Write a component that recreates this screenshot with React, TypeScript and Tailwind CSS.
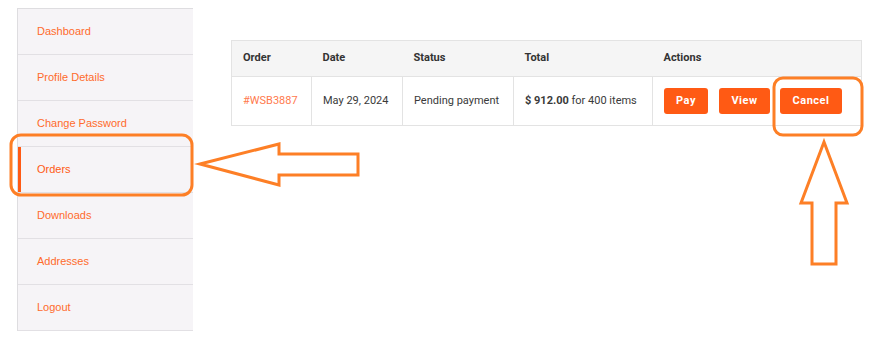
const menu = [
  "Dashboard",
  "Profile Details",
  "Change Password",
  "Orders",
  "Downloads",
  "Addresses",
  "Logout",
];

function Sidebar() {
  return (
    <nav className="w-[176px] shrink-0 border-l border-t border-[#dedde0] bg-[#f6f4f7] font-['Liberation_Sans',Arial,sans-serif] text-[11px]">
      {menu.map((m) => {
        const active = m === "Orders";
        return (
          <div
            key={m}
            className={`flex h-[46px] items-center border-b border-[#e2e0e4] pl-[19px] ${
              active ? "relative text-[#ff5a14]" : "text-[#ff6b2c]"
            }`}
          >
            {active && <span className="absolute left-0 top-0 h-full w-[3px] bg-[#ff5a14]" />}
            {m}
          </div>
        );
      })}
    </nav>
  );
}

function OrdersTable() {
  const th = "border-b border-[#e3e3e3] px-[11px] text-left font-bold text-[#333]";
  const td = "border-r border-[#e3e3e3] px-[11px] text-[#3a3a3a]";
  return (
    <table className="w-[631px] border-collapse border border-[#e3e3e3] font-['Roboto',sans-serif] text-[11px]">
      <thead>
        <tr className="h-[36px] bg-[#f5f5f5]">
          <th className={`${th} w-[80px]`}>Order</th>
          <th className={`${th} w-[91px]`}>Date</th>
          <th className={`${th} w-[111px]`}>Status</th>
          <th className={`${th} w-[139px]`}>Total</th>
          <th className={th}>Actions</th>
        </tr>
      </thead>
      <tbody>
        <tr className="h-[49px]">
          <td className={`${td} text-[#ff7a4d]`}>#WSB3887</td>
          <td className={td}>May 29, 2024</td>
          <td className={td}>Pending payment</td>
          <td className={td}>
            <span className="font-bold">$ 912.00</span> for 400 items
          </td>
          <td className="px-[11px]">
            <div className="flex gap-[11px]">
              <button className="h-[26px] w-[44px] rounded-[3px] bg-[#ff5a14] text-[11px] font-bold tracking-[0.5px] text-white">
                Pay
              </button>
              <button className="h-[26px] w-[51px] rounded-[3px] bg-[#ff5a14] text-[11px] font-bold tracking-[0.5px] text-white">
                View
              </button>
              <button className="-ml-[1px] h-[26px] w-[62px] rounded-[3px] bg-[#ff5a14] text-[11px] font-bold tracking-[0.5px] text-white">
                Cancel
              </button>
            </div>
          </td>
        </tr>
      </tbody>
    </table>
  );
}

function Annotations() {
  const c = "#fd7f26";
  return (
    <svg className="pointer-events-none absolute inset-0" width="893" height="358">
      <g fill="none" stroke={c} strokeWidth="3" strokeLinejoin="miter">
        <rect x="11" y="135" width="181" height="60" rx="10" />
        <polygon points="200,164 279,144 279,154 358,154 358,175 279,175 279,185" />
        <rect x="774" y="78" width="88" height="57" rx="9" />
        <polygon points="824,142 847,203 836,203 836,264 812,264 812,203 801,203" />
      </g>
    </svg>
  );
}

export default function App() {
  return (
    <div className="relative h-[358px] w-[893px] overflow-hidden bg-white">
      <div className="flex items-start pl-[17px] pt-[8px]">
        <Sidebar />
        <div className="ml-[38px] mt-[32px]">
          <OrdersTable />
        </div>
      </div>
      <Annotations />
    </div>
  );
}
